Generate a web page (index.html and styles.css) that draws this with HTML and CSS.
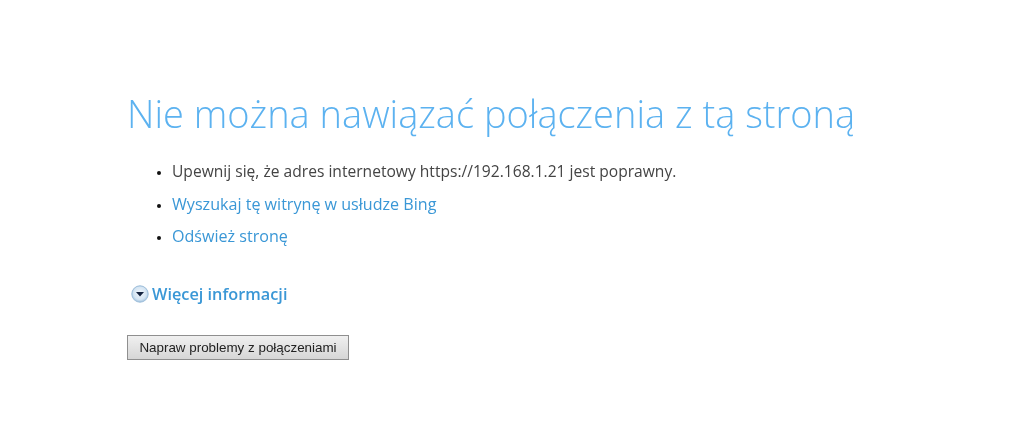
FILE: index.html
```html
<!DOCTYPE html>
<html lang="pl">
<head>
<meta charset="utf-8">
<title>Nie można nawiązać połączenia z tą stroną</title>
<link rel="stylesheet" href="styles.css">
</head>
<body>
<main class="page">
  <h1 class="title">Nie można nawiązać połączenia z tą stroną</h1>
  <ul class="tips">
    <li>Upewnij się, że adres internetowy https://192.168.1.21 jest poprawny.</li>
    <li><a href="#">Wyszukaj tę witrynę w usłudze Bing</a></li>
    <li><a href="#">Odśwież stronę</a></li>
  </ul>
  <div class="more">
    <svg class="more-icon" width="18" height="18" viewBox="0 0 18 18">
      <defs>
        <radialGradient id="g" cx="0.5" cy="0.45" r="0.55">
          <stop offset="0" stop-color="#f2f7fc"/>
          <stop offset="0.7" stop-color="#d5e5f3"/>
          <stop offset="1" stop-color="#9fc1de"/>
        </radialGradient>
      </defs>
      <circle cx="9" cy="9" r="8.2" fill="url(#g)" stroke="#9dbdd9"/>
      <path d="M5 7h8L9 11.5z" fill="#14233f"/>
    </svg>
    <a href="#" class="more-link">Więcej informacji</a>
  </div>
  <button class="fix" type="button">Napraw problemy z połączeniami</button>
</main>
</body>
</html>
```
FILE: styles.css
```css
html, body { margin: 0; background: #fff; }
body { height: 443px; overflow: hidden; font-family: "Open Sans", "Noto Sans", sans-serif; }
.page { padding: 87px 0 0 127px; filter: blur(0.35px); }
.title { margin: 0; font-size: 38px; line-height: 52px; font-weight: 300; color: #5cb2f0; white-space: nowrap; }
.tips { margin: 16px 0 0; padding: 0 0 0 45px; font-size: 15.6px; line-height: 32.5px; color: #444; }
.tips li::marker { font-size: 12px; color: #111; }
.tips a { font-size: 16.1px; }
.tips a, .more-link { color: #3a97d6; text-decoration: none; }
.more { display: flex; align-items: center; gap: 3px; margin-top: 30px; padding-left: 4px; }
.more-link { font-size: 16.3px; font-weight: 600; }
.fix { display: block; margin-top: 30px; width: 222px; height: 25px; padding: 0; font-family: "Liberation Sans", Arial, sans-serif; font-size: 13.4px; color: #222; background: linear-gradient(#f0f0f0, #d6d6d6); border: 1px solid #8f8f8f; border-radius: 0; }
```
